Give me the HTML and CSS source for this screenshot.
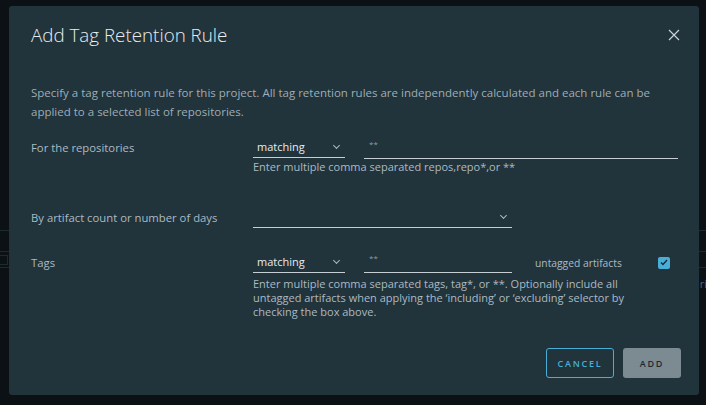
FILE: index.html
```html
<!DOCTYPE html>
<html lang="en">
<head>
    <meta charset="UTF-8">
    <title>Tag Retention</title>
    <link rel="stylesheet" href="styles.css">
</head>
<body>
<div class="page">
    <div class="page-row"></div>
    <div class="page-row"><span class="page-box"></span><span class="page-text">ri</span></div>
    <div class="page-row"></div>
</div>

<div class="modal">
    <div class="modal-header">
        <h3 class="modal-title">Add Tag Retention Rule</h3>
        <button class="close" aria-label="Close">
            <svg width="12" height="12" viewBox="0 0 12 12">
                <path d="M1 1 L11 11 M11 1 L1 11" stroke="#c7d3da" stroke-width="1.2" fill="none"/>
            </svg>
        </button>
    </div>
    <div class="modal-body">
        <p class="intro">Specify a tag retention rule for this project. All tag retention rules are independently calculated and each rule can be applied to a selected list of repositories.</p>

        <div class="form-row">
            <label class="form-label">For the repositories</label>
            <div class="form-field">
                <div class="controls">
                    <div class="select small">matching <span class="caret"></span></div>
                    <div class="input wide">**</div>
                </div>
                <div class="helper">Enter multiple comma separated repos,repo*,or **</div>
            </div>
        </div>

        <div class="form-row row-count">
            <label class="form-label">By artifact count or number of days</label>
            <div class="form-field">
                <div class="controls">
                    <div class="select long"><span class="caret"></span></div>
                </div>
            </div>
        </div>

        <div class="form-row row-tags">
            <label class="form-label">Tags</label>
            <div class="form-field">
                <div class="controls">
                    <div class="select small">matching <span class="caret"></span></div>
                    <div class="input short">**</div>
                    <span class="untagged">untagged artifacts</span>
                    <span class="checkbox">
                        <svg width="8" height="7" viewBox="0 0 8 7">
                            <path d="M1 3.5 L3 5.5 L7 1" stroke="#1b2a32" stroke-width="1.4" fill="none"/>
                        </svg>
                    </span>
                </div>
                <div class="helper helper-wrap">Enter multiple comma separated tags, tag*, or **. Optionally include all untagged artifacts when applying the ‘including’ or ‘excluding’ selector by checking the box above.</div>
            </div>
        </div>
    </div>
    <div class="modal-footer">
        <button class="btn btn-outline">CANCEL</button>
        <button class="btn btn-disabled">ADD</button>
    </div>
</div>
</body>
</html>
```

FILE: styles.css
```css
* {
    margin: 0;
    box-sizing: border-box;
}

body {
    background: #0b1114;
    font-family: "Open Sans", Lato, sans-serif;
    color: #acbac3;
    width: 706px;
    height: 405px;
    overflow: hidden;
    position: relative;
}

.page {
    padding-top: 230px;
}

.page-row {
    height: 21px;
    border-top: 1px solid #1d2a30;
    display: flex;
    justify-content: space-between;
}

.page-row:nth-child(2) {
    height: 16px;
}

.page-box {
    display: block;
    width: 8px;
    height: 10px;
    margin-top: 3px;
    border: 1px solid #1d2a30;
    border-left: none;
}

.page-text {
    font-size: 11px;
    color: #56646b;
    margin-top: 24px;
    margin-right: -1px;
}

.modal {
    position: absolute;
    left: 9px;
    top: 6px;
    width: 690px;
    height: 389px;
    background: #21333b;
    border-radius: 3px;
    display: flex;
    flex-direction: column;
    padding: 0 18px 17px 22px;
}

.modal-header {
    display: flex;
    justify-content: space-between;
    align-items: center;
    height: 56px;
    padding-top: 1px;
}

.modal-title {
    font-family: "Open Sans", Lato, sans-serif;
    font-weight: 300;
    font-size: 18.8px;
    color: #e9ecef;
}

.close {
    background: none;
    border: none;
    padding: 0;
    width: 12px;
    height: 12px;
    margin-right: 1px;
    display: flex;
}

.modal-body {
    flex: 1;
    padding-top: 21px;
    font-size: 11px;
}

.intro {
    line-height: 19px;
    color: #9fadb5;
    padding-right: 20px;
    font-size: 11.5px;
}

.form-row {
    display: flex;
    margin-top: 17px;
}

.form-label {
    width: 222px;
    flex: none;
    font-size: 11.3px;
    line-height: 20px;
    color: #acbac3;
}

.form-field {
    flex: 1;
}

.controls {
    display: flex;
    align-items: center;
    height: 20px;
}

.select {
    position: relative;
    height: 20px;
    border-bottom: 1px solid #c5ced3;
    color: #e9ecef;
    font-size: 11px;
    line-height: 18px;
    padding-left: 4px;
}

.select.small {
    width: 92px;
}

.select.long {
    width: 259px;
}

.caret {
    position: absolute;
    right: 6px;
    top: 5px;
    width: 5px;
    height: 5px;
    border-right: 1px solid #acbac3;
    border-bottom: 1px solid #acbac3;
    transform: rotate(45deg);
}

.input {
    height: 21px;
    border-bottom: 1px solid #c5ced3;
    margin-left: 19px;
    color: #8d9ba3;
    font-size: 8px;
    line-height: 12px;
    padding-left: 5px;
}

.input.wide {
    width: 314px;
}

.input.short {
    width: 148px;
}

.untagged {
    margin-left: 23px;
    width: 123px;
    font-size: 10.3px;
    color: #acbac3;
}

.checkbox {
    width: 12px;
    height: 12px;
    background: #49afd9;
    border-radius: 2px;
    display: flex;
    align-items: center;
    justify-content: center;
}

.helper {
    margin-top: 2px;
    font-size: 11px;
    line-height: 14.5px;
    color: #acbac3;
}

.helper-wrap {
    width: 405px;
    margin-top: 4px;
    line-height: 14px;
}

.row-count {
    margin-top: 33px;
}

.row-tags {
    margin-top: 25px;
}

.modal-footer {
    display: flex;
    justify-content: flex-end;
    gap: 9px;
}

.btn {
    height: 30px;
    font-family: "Open Sans", Lato, sans-serif;
    font-size: 9px;
    font-weight: 600;
    letter-spacing: 1.8px;
    border-radius: 3px;
}

.btn-outline {
    width: 68px;
    background: transparent;
    border: 1px solid #49afd9;
    color: #49afd9;
}

.btn-disabled {
    width: 58px;
    background: #7c8a91;
    border: none;
    color: #1b2a32;
}
```
